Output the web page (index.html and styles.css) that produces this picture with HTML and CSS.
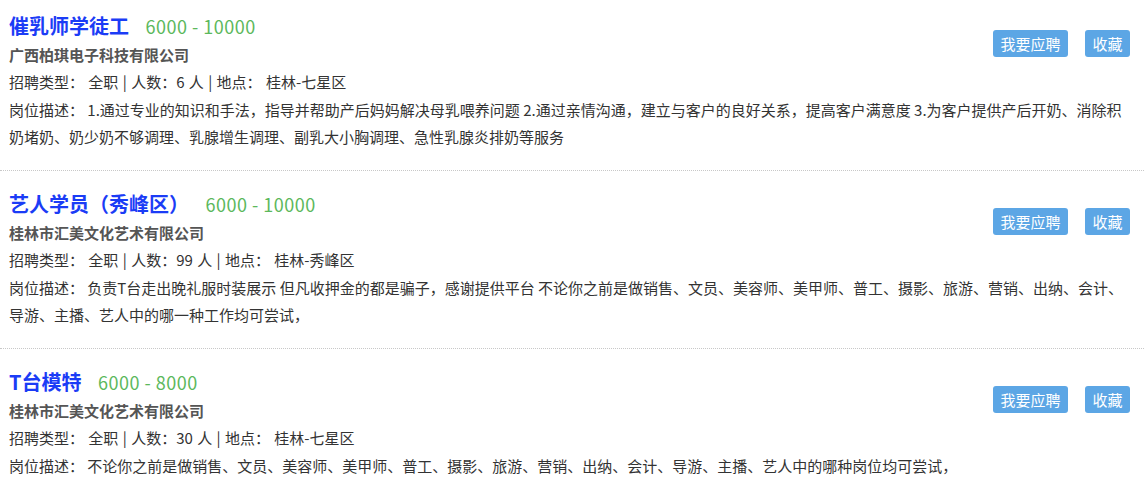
FILE: index.html
```html
<!DOCTYPE html>
<html lang="zh-CN">
<head>
  <meta charset="UTF-8" />
  <title>招聘信息</title>
  <link rel="stylesheet" href="styles.css">
</head>
<body>
  <ul class="job-list">
    <li class="job-item">
      <div class="job-head">
        <div class="job-main">
          <div class="job-title">催乳师学徒工 <span class="salary">6000 - 10000</span></div>
          <div class="company">广西柏琪电子科技有限公司</div>
          <div class="job-meta">招聘类型： 全职 | 人数：6 人 | 地点： 桂林-七星区</div>
        </div>
        <div class="job-actions">
          <button class="btn">我要应聘</button>
          <button class="btn">收藏</button>
        </div>
      </div>
      <p class="job-desc">岗位描述： 1.通过专业的知识和手法，指导并帮助产后妈妈解决母乳喂养问题 2.通过亲情沟通，建立与客户的良好关系，提高客户满意度 3.为客户提供产后开奶、消除积奶堵奶、奶少奶不够调理、乳腺增生调理、副乳大小胸调理、急性乳腺炎排奶等服务</p>
    </li>
    <li class="job-item">
      <div class="job-head">
        <div class="job-main">
          <div class="job-title">艺人学员（秀峰区） <span class="salary">6000 - 10000</span></div>
          <div class="company">桂林市汇美文化艺术有限公司</div>
          <div class="job-meta">招聘类型： 全职 | 人数：99 人 | 地点： 桂林-秀峰区</div>
        </div>
        <div class="job-actions">
          <button class="btn">我要应聘</button>
          <button class="btn">收藏</button>
        </div>
      </div>
      <p class="job-desc">岗位描述： 负责T台走出晚礼服时装展示 但凡收押金的都是骗子，感谢提供平台 不论你之前是做销售、文员、美容师、美甲师、普工、摄影、旅游、营销、出纳、会计、导游、主播、艺人中的哪一种工作均可尝试，</p>
    </li>
    <li class="job-item">
      <div class="job-head">
        <div class="job-main">
          <div class="job-title">T台模特 <span class="salary">6000 - 8000</span></div>
          <div class="company">桂林市汇美文化艺术有限公司</div>
          <div class="job-meta">招聘类型： 全职 | 人数：30 人 | 地点： 桂林-七星区</div>
        </div>
        <div class="job-actions">
          <button class="btn">我要应聘</button>
          <button class="btn">收藏</button>
        </div>
      </div>
      <p class="job-desc">岗位描述： 不论你之前是做销售、文员、美容师、美甲师、普工、摄影、旅游、营销、出纳、会计、导游、主播、艺人中的哪种岗位均可尝试，</p>
    </li>
  </ul>
</body>
</html>
```

FILE: styles.css
```css
body { margin: 0; background: #fff; font-family: "Noto Sans CJK SC", "Noto Sans", sans-serif; color: #333; }
.job-list { list-style: none; margin: 0; padding: 0; }
.job-item { padding: 15px 14px 20px 9px; border-bottom: 1px dotted #c8c8c8; }
.job-item:first-child { padding-top: 8px; }
.job-head { display: flex; justify-content: space-between; align-items: flex-start; }
.job-title { font-size: 20px; font-weight: bold; color: #1b3cf6; line-height: 36px; }
.salary { font-size: 18px; font-weight: normal; color: #5cb85c; margin-left: 12px; letter-spacing: 0.5px; }
.company { font-size: 15px; font-weight: bold; color: #555; line-height: 22px; }
.job-meta { font-size: 15px; line-height: 28px; margin-top: 2px; word-spacing: 1px; }
.job-actions { display: flex; gap: 17px; margin-top: 22px; }
.btn { height: 27px; padding: 0 7.5px; border: none; border-radius: 3px; background: #5ca6e5;
       color: #fff; font-family: inherit; font-size: 15px; cursor: pointer; }
.btn:hover { background: #4a94d4; }
.job-desc { margin: 0; font-size: 15px; line-height: 27px; }
```
